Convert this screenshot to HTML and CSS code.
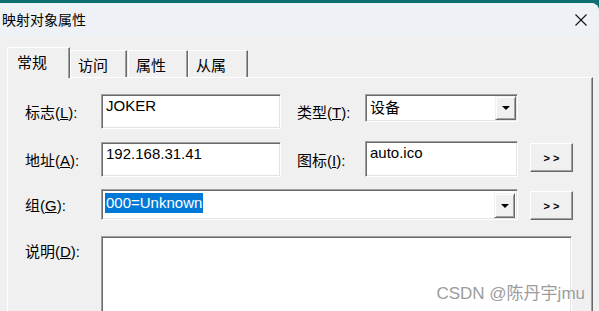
FILE: index.html
```html
<!DOCTYPE html>
<html lang="zh-CN">
<head>
  <meta charset="UTF-8" />
  <title>映射对象属性</title>
  <link rel="stylesheet" href="styles.css">
</head>
<body>
  <div class="window">
    <div class="titlebar">
      <span class="title">映射对象属性</span>
      <span class="close">
        <svg width="12" height="12" viewBox="0 0 12 12"><path d="M0.5 0.5L11.5 11.5M11.5 0.5L0.5 11.5" stroke="#111" stroke-width="1.1" fill="none"/></svg>
      </span>
    </div>
    <div class="content">
      <div class="tabs">
        <div class="tab active">常规</div>
        <div class="tab">访问</div>
        <div class="tab t3">属性</div>
        <div class="tab t4">从属</div>
      </div>
      <div class="panel">
        <div class="form">
          <label class="lbl">标志(<u>L</u>):</label>
          <div class="field f1 r1">JOKER</div>
          <label class="lbl l2">类型(<u>T</u>):</label>
          <div class="combo c1">
            <span class="combo-text">设备</span>
            <span class="drop"><i class="arrow"></i></span>
          </div>

          <label class="lbl">地址(<u>A</u>):</label>
          <div class="field f1 r2">192.168.31.41</div>
          <label class="lbl l2">图标(<u>I</u>):</label>
          <div class="field f2">auto.ico</div>
          <div class="btn b-row2">&gt; &gt;</div>

          <label class="lbl">组(<u>G</u>):</label>
          <div class="combo c2">
            <span class="combo-text"><span class="sel">000=Unknown</span></span>
            <span class="drop"><i class="arrow"></i></span>
          </div>
          <div class="btn b-row3">&gt; &gt;</div>

          <label class="lbl top">说明(<u>D</u>):</label>
          <div class="field memo"></div>
        </div>
      </div>
    </div>
    <div class="watermark">CSDN @陈丹宇jmu</div>
  </div>
</body>
</html>
```

FILE: styles.css
```css
html, body {
  margin: 0;
  padding: 0;
}
body {
  background: #0c6f70;
  font-family: "Liberation Sans", "Noto Sans CJK SC", sans-serif;
  font-size: 15px;
  color: #000;
  overflow: hidden;
}
.window {
  position: relative;
  margin-top: 3px;
  height: 308px;
  background: #f0f0f0;
  border-top-right-radius: 8px;
  overflow: hidden;
}
.titlebar {
  height: 32px;
  background: #eef2f6;
  display: flex;
  align-items: center;
  justify-content: space-between;
}
.title {
  padding-left: 2px;
  font-size: 14px;
  font-family: "Noto Sans CJK SC", sans-serif;
}
.close {
  display: flex;
  margin-right: 12px;
  margin-top: 2px;
}
.content {
  padding: 12px 6px 0 7px;
}
.tabs {
  display: flex;
  align-items: flex-end;
  height: 30px;
}
.tab {
  height: 27px;
  box-sizing: border-box;
  padding: 5px 0 0 7px;
  width: 57px;
  border-top: 1px solid #fff;
  border-left: 1px solid #fff;
  border-right: 1px solid #696969;
  box-shadow: inset -1px 0 #a0a0a0;
  font-family: "Noto Sans CJK SC", sans-serif;
  line-height: 18px;
}
.tab.active {
  height: 31px;
  width: 63px;
  margin-bottom: -1px;
  padding: 5px 0 0 9px;
  position: relative;
  z-index: 1;
  background: #f0f0f0;
}
.tab.t3 {
  width: 60px;
  margin-left: 1px;
}
.tab.t4 {
  width: 60px;
}
.panel {
  border-top: 1px solid #fff;
  border-left: 1px solid #fff;
  border-right: 1px solid #696969;
  box-shadow: inset -1px 0 #a0a0a0;
  height: 240px;
  padding: 15px 0 0 17px;
}
.form {
  display: grid;
  grid-template-columns: 76px 180px 16px 68px 153px 12px 43px;
  grid-template-rows: 36px 36px 31px auto;
  row-gap: 12px;
}
.lbl {
  grid-column: 1;
  align-self: center;
  white-space: nowrap;
}
.lbl.l2 {
  grid-column: 4;
}
.lbl.top {
  align-self: start;
  margin-top: 8px;
}
.field {
  box-sizing: border-box;
  background: #fff;
  border: 1px solid;
  border-color: #a0a0a0 #fff #fff #a0a0a0;
  box-shadow: inset 1px 1px #696969, inset -1px -1px #e3e3e3;
  padding: 1px 4px;
  line-height: 20px;
  height: 35px;
}
.f1 {
  grid-column: 2;
  align-self: end;
}
.f2 {
  grid-column: 5;
  height: 36px;
  align-self: end;
}
.memo {
  grid-column: 2 / 8;
  margin-top: 4px;
  height: 120px;
  margin-right: 1px;
}
.combo {
  box-sizing: border-box;
  background: #fff;
  border: 1px solid;
  border-color: #a0a0a0 #fff #fff #a0a0a0;
  box-shadow: inset 1px 1px #696969, inset -1px -1px #e3e3e3;
  display: flex;
  padding: 1px 1px 1px 2px;
  align-self: start;
}
.c1 {
  grid-column: 5;
  height: 28px;
  margin-top: 1px;
}
.c2 {
  grid-column: 2 / 6;
  height: 31px;
  padding-top: 3px;
  padding-right: 2px;
}
.combo-text {
  flex: 1;
  padding-left: 2px;
  line-height: 22px;
  font-family: "Noto Sans CJK SC", sans-serif;
}
.c2 .combo-text {
  font-family: "Liberation Sans", sans-serif;
  line-height: 20px;
  padding-left: 1px;
}
.sel {
  background: #0078d7;
  color: #fff;
  display: inline-block;
  padding: 0 1px;
}
.drop {
  width: 21px;
  box-sizing: border-box;
  background: #f0f0f0;
  border: 1px solid;
  border-color: #f0f0f0 #696969 #696969 #f0f0f0;
  box-shadow: inset 1px 1px #fff, inset -1px -1px #a0a0a0;
  display: flex;
  align-items: center;
  justify-content: center;
}
.arrow {
  width: 0;
  height: 0;
  border-left: 4px solid transparent;
  border-right: 4px solid transparent;
  border-top: 4px solid #000;
}
.btn {
  grid-column: 7;
  box-sizing: border-box;
  height: 29px;
  background: #f0f0f0;
  border: 1px solid;
  border-color: #fff #696969 #696969 #fff;
  box-shadow: inset -1px -1px #a0a0a0;
  font-size: 11px;
  font-weight: bold;
  display: flex;
  align-items: center;
  justify-content: center;
  align-self: start;
}
.b-row2 {
  margin-top: 2px;
}
.b-row3 {
  margin-top: 2px;
}
.watermark {
  position: absolute;
  right: 14px;
  top: 276px;
  font-size: 17px;
  color: #9c9c9c;
  text-shadow: 0 0 2px #fff;
  font-family: "Liberation Sans", "Noto Sans CJK SC", sans-serif;
}
```
